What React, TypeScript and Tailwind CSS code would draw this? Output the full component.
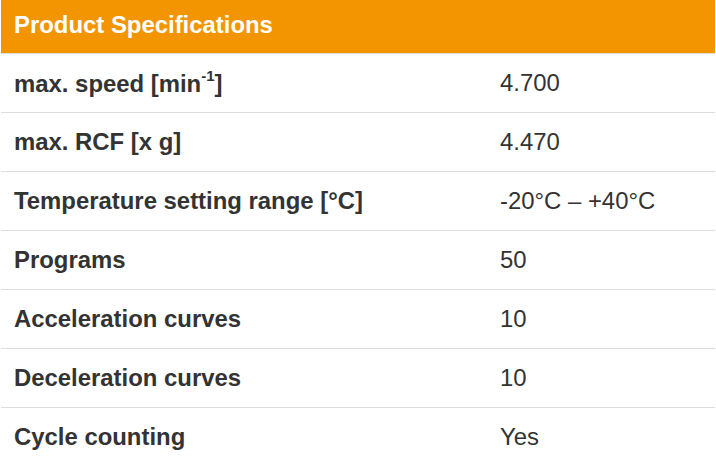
import React from "react";

const rows: { label: React.ReactNode; value: string }[] = [
  {
    label: (
      <>
        max. speed [min<sup className="text-[15px] relative -top-[2px] align-super leading-none">-1</sup>]
      </>
    ),
    value: "4.700",
  },
  { label: "max. RCF [x g]", value: "4.470" },
  { label: "Temperature setting range [°C]", value: "-20°C – +40°C" },
  { label: "Programs", value: "50" },
  { label: "Acceleration curves", value: "10" },
  { label: "Deceleration curves", value: "10" },
  { label: "Cycle counting", value: "Yes" },
];

export default function App() {
  return (
    <div
      className="w-[716px] h-[460px] overflow-hidden bg-white px-[1px]"
      style={{ fontFamily: '"Liberation Sans", Arial, sans-serif' }}
    >
      <div className="h-[53px] bg-[#f39500] flex items-center pl-[13px] pb-[4px]">
        <span className="text-white font-bold text-[23.9px] leading-none">Product Specifications</span>
      </div>
      {rows.map((r, i) => (
        <div
          key={i}
          className="grid grid-cols-[486px_1fr] h-[59px] border-t border-[#dddddd] items-center text-[#333333] text-[23.9px]"
        >
          <div className="pl-[13px] font-bold leading-none">{r.label}</div>
          <div className="pl-[13px] leading-none">{r.value}</div>
        </div>
      ))}
    </div>
  );
}
